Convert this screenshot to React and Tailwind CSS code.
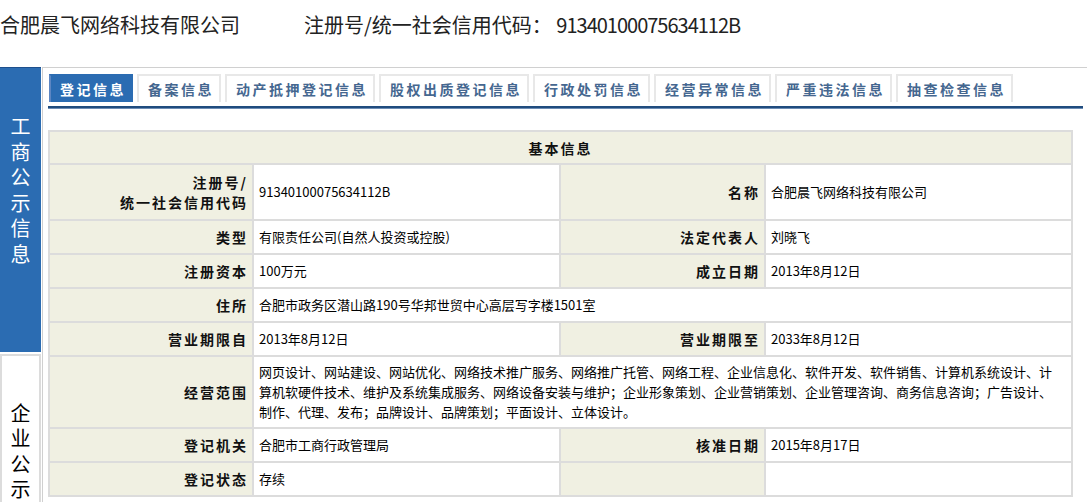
import React from "react";

const FONT = "font-['Noto_Sans_CJK_SC','Noto_Sans',sans-serif]";

const tabs = [
  "登记信息",
  "备案信息",
  "动产抵押登记信息",
  "股权出质登记信息",
  "行政处罚信息",
  "经营异常信息",
  "严重违法信息",
  "抽查检查信息",
];

const scope =
  "网页设计、网站建设、网站优化、网络技术推广服务、网络推广托管、网络工程、企业信息化、软件开发、软件销售、计算机系统设计、计算机软硬件技术、维护及系统集成服务、网络设备安装与维护；企业形象策划、企业营销策划、企业管理咨询、商务信息咨询；广告设计、制作、代理、发布；品牌设计、品牌策划；平面设计、立体设计。";

function Label({ children, h = "h-[34px]" }) {
  return (
    <td
      className={`${h} bg-[#f0f0e2] border-2 border-[#dcdcdc] text-right align-middle pr-[4px] font-bold text-[14px] tracking-[2px] leading-[20px] text-[#111]`}
    >
      {children}
    </td>
  );
}

function Value({ children, colSpan, h = "h-[34px]" }) {
  return (
    <td
      colSpan={colSpan}
      className={`${h} bg-white border-2 border-[#dcdcdc] align-middle pl-[5px] pr-[7px] text-[13px] leading-[20px] text-black`}
    >
      {children}
    </td>
  );
}

export default function App() {
  return (
    <div className={`${FONT} h-[502px] overflow-hidden bg-white text-[#222]`}>
      <div className="h-[50px] flex items-center text-[20px] leading-[24px] text-[#222]">
        <span>合肥晨飞网络科技有限公司</span>
        <span className="ml-[64px]">
          注册号/统一社会信用代码：{" "}
          <span className="tracking-[-1px]">91340100075634112B</span>
        </span>
      </div>

      <div className="flex mt-[17px] h-[435px]">
        {/* side menu */}
        <div className="w-[41px] shrink-0 mr-[1px] flex flex-col">
          <div className="h-[285px] shrink-0 bg-[#2b6cb2] border-t border-[#1d4f8c] pt-[45px]">
            <div className="w-[20px] mx-auto text-[20px] leading-[25.5px] text-white text-center">
              工商公示信息
            </div>
          </div>
          <div className="mt-[2px] flex-1 bg-white border-2 border-[#dcdcdc] pt-[44px]">
            <div className="w-[20px] mx-auto text-[20px] leading-[25.3px] text-black text-center">
              企业公示信息
            </div>
          </div>
        </div>

        {/* main panel */}
        <div className="flex-1 border-l border-t border-[#d0d0d0] pl-[5px] pt-[6px] pr-[4px]">
          <div className="flex gap-[4px] ml-[1px]">
            {tabs.map((t, i) => (
              <div
                key={t}
                className={
                  i === 0
                    ? "h-[28px] flex items-center pl-[9px] pr-[5px] border-2 border-b-0 border-[#2b6cb2] border-l-[#5d86c2] bg-[#2b6cb2] text-white font-bold text-[14px] tracking-[2.5px]"
                    : "h-[28px] flex items-center pl-[9px] pr-[5px] border-2 border-b-0 border-[#e8e8e8] bg-white text-[#456790] font-bold text-[14px] tracking-[2.5px]"
                }
              >
                {t}
              </div>
            ))}
          </div>
          <div className="mt-[4px] h-[3px] bg-[#204c7e] border-b border-[#6d8db5]" />

          <table className="mt-[21px] w-[1023px] table-fixed border-collapse">
            <colgroup>
              <col className="w-[204px]" />
              <col className="w-[307px]" />
              <col className="w-[205px]" />
              <col className="w-[307px]" />
            </colgroup>
            <tbody>
              <tr>
                <td
                  colSpan={4}
                  className="h-[33px] bg-[#f0f0e2] border-2 border-[#dcdcdc] text-center font-bold text-[14px] tracking-[2px] leading-[20px] text-[#111]"
                >
                  基本信息
                </td>
              </tr>
              <tr>
                <Label h="h-[56px]">
                  注册号/
                  <br />
                  统一社会信用代码
                </Label>
                <Value h="h-[56px]">91340100075634112B</Value>
                <Label h="h-[56px]">名称</Label>
                <Value h="h-[56px]">合肥晨飞网络科技有限公司</Value>
              </tr>
              <tr>
                <Label>类型</Label>
                <Value>有限责任公司(自然人投资或控股)</Value>
                <Label>法定代表人</Label>
                <Value>刘晓飞</Value>
              </tr>
              <tr>
                <Label>注册资本</Label>
                <Value>100万元</Value>
                <Label>成立日期</Label>
                <Value>2013年8月12日</Value>
              </tr>
              <tr>
                <Label>住所</Label>
                <Value colSpan={3}>合肥市政务区潜山路190号华邦世贸中心高层写字楼1501室</Value>
              </tr>
              <tr>
                <Label>营业期限自</Label>
                <Value>2013年8月12日</Value>
                <Label>营业期限至</Label>
                <Value>2033年8月12日</Value>
              </tr>
              <tr>
                <Label h="h-[72px]">经营范围</Label>
                <Value colSpan={3} h="h-[72px]">
                  {scope}
                </Value>
              </tr>
              <tr>
                <Label>登记机关</Label>
                <Value>合肥市工商行政管理局</Value>
                <Label>核准日期</Label>
                <Value>2015年8月17日</Value>
              </tr>
              <tr>
                <Label>登记状态</Label>
                <Value>存续</Value>
                <Label />
                <Value />
              </tr>
            </tbody>
          </table>
        </div>
      </div>
    </div>
  );
}
